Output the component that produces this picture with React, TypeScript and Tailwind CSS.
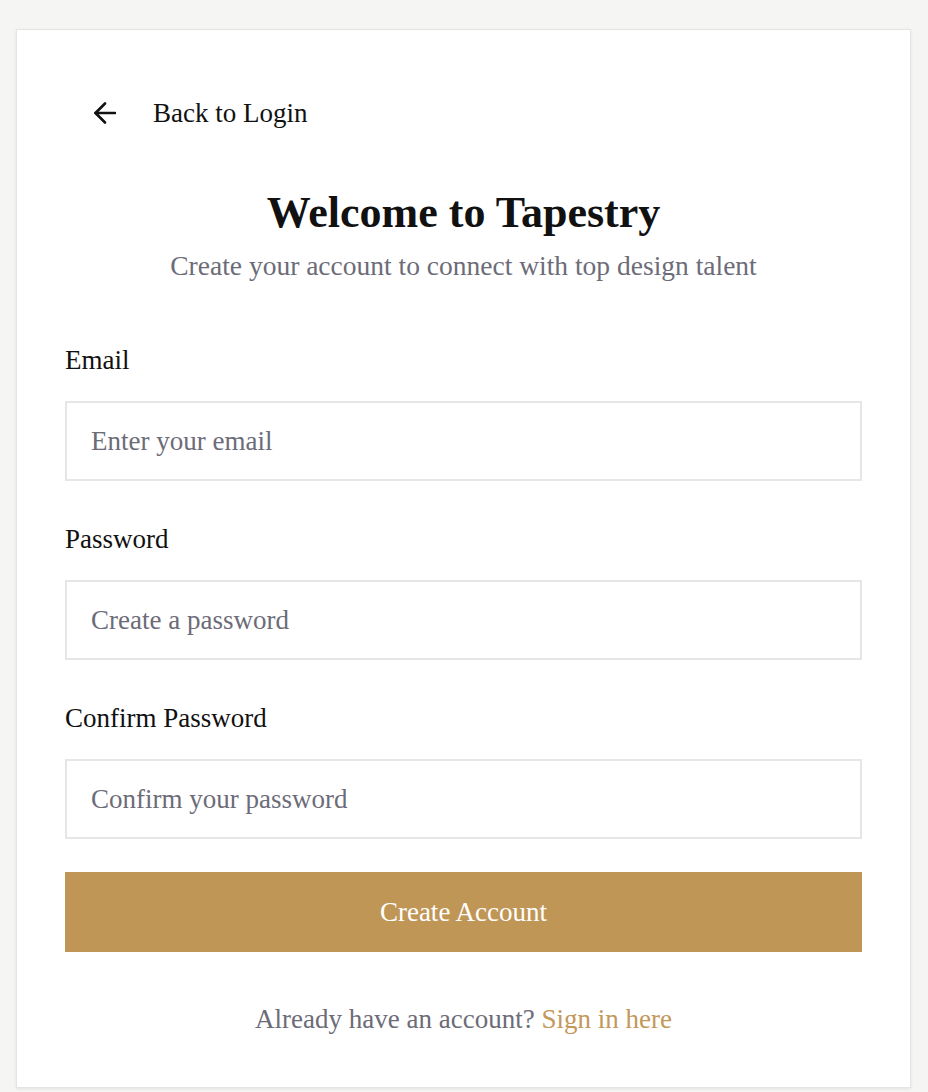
import { useState } from 'react';

const fields = [
  { id: 'email', label: 'Email', type: 'email', placeholder: 'Enter your email' },
  { id: 'password', label: 'Password', type: 'password', placeholder: 'Create a password' },
  { id: 'confirm', label: 'Confirm Password', type: 'password', placeholder: 'Confirm your password' },
];

function BackArrow() {
  return (
    <svg width="22" height="22" viewBox="0 0 22 22" fill="none" stroke="currentColor" strokeWidth="2.6" strokeLinecap="round" strokeLinejoin="round">
      <path d="M21 11H1.5" />
      <path d="M11 1.5 1.5 11l9.5 9.5" />
    </svg>
  );
}

export default function App() {
  const [values, setValues] = useState<Record<string, string>>({});

  return (
    <div className="min-h-screen bg-[#f5f5f3] pt-[29px] font-['Liberation_Serif',serif]">
      <div className="ml-4 w-[895px] border border-[#e4e4e2] bg-white px-[48px] pt-[48px] pb-[50px] shadow-[0_1px_3px_rgba(0,0,0,0.08)]">
        {/* Back link */}
        <a href="#" className="flex h-[70px] items-center gap-[37px] pl-[29px] text-[27px] text-[#111]">
          <BackArrow />
          <span>Back to Login</span>
        </a>

        {/* Heading */}
        <h1 className="mt-[38px] text-center text-[44px] leading-[54px] font-bold text-[#111]">
          Welcome to Tapestry
        </h1>
        <p className="mt-[8px] text-center text-[27.5px] leading-[36px] text-[#6c6c78]">
          Create your account to connect with top design talent
        </p>

        {/* Form */}
        <form className="mt-[58px] flex flex-col gap-[40px]" onSubmit={(e) => e.preventDefault()}>
          {fields.map((f) => (
            <div key={f.id} className="flex flex-col">
              <label htmlFor={f.id} className="text-[27px] leading-[36px] text-[#111]">
                {f.label}
              </label>
              <input
                id={f.id}
                type={f.type}
                placeholder={f.placeholder}
                value={values[f.id] ?? ''}
                onChange={(e) => setValues({ ...values, [f.id]: e.target.value })}
                className="mt-[23px] h-[80px] w-full border-2 border-[#e6e6e6] px-[24px] text-[27px] text-[#111] outline-none placeholder:text-[#6c6c78]"
              />
            </div>
          ))}
        </form>

        <button className="mt-[33px] h-[80px] w-full bg-[#c09656] text-[27px] text-white">
          Create Account
        </button>

        <p className="mt-[49px] text-center text-[27px] leading-[36px] text-[#6c6c78]">
          Already have an account?{' '}
          <a href="#" className="text-[#c4975a]">Sign in here</a>
        </p>
      </div>
    </div>
  );
}
